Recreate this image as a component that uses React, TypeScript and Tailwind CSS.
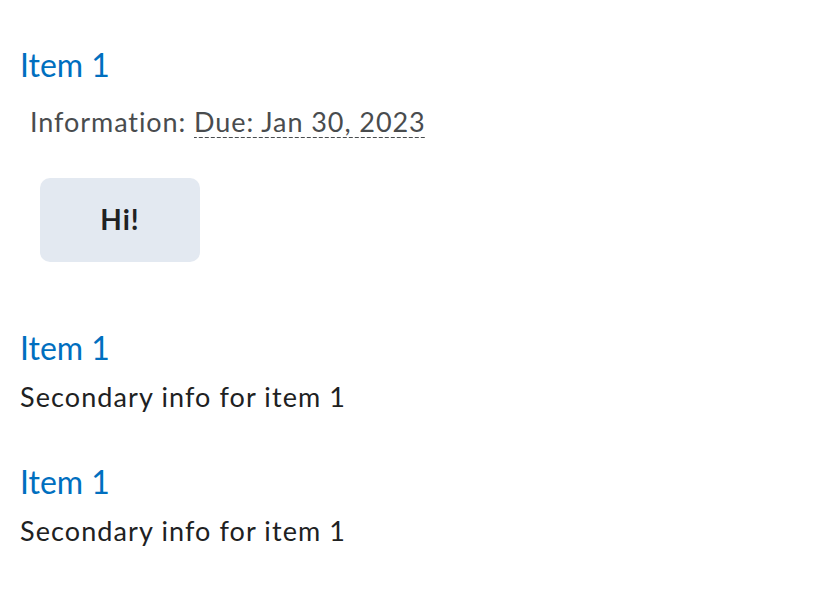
export default function App() {
  return (
    <div className="min-h-[594px] bg-white px-5 pt-[45px] text-[#202122]" style={{ fontFamily: 'Lato, "Noto Sans", sans-serif' }}>
      <div className="text-[32px] leading-[40px] text-[#006fbf]">Item 1</div>
      <div className="mt-[17px] pl-[10px] text-[27px] leading-[40px] tracking-[0.93px] text-[#494c4e]">
        Information:{' '}
        <span className="bg-[linear-gradient(to_right,#494c4e_4px,transparent_4px)] bg-[length:6px_1px] bg-bottom bg-repeat-x">
          Due: Jan 30, 2023
        </span>
      </div>
      <div className="mt-[36px] pl-5">
        <button className="h-[84px] w-[160px] rounded-[10px] bg-[#e3e9f1] pb-[3px] text-[28px] font-bold tracking-[1px] text-[#202122]">Hi!</button>
      </div>
      <div className="mt-[66px]">
        <div className="text-[32px] leading-[40px] text-[#006fbf]">Item 1</div>
        <div className="mt-[11px] text-[27px] leading-[36px] tracking-[1.1px]">Secondary info for item 1</div>
      </div>
      <div className="mt-[47px]">
        <div className="text-[32px] leading-[40px] text-[#006fbf]">Item 1</div>
        <div className="mt-[11px] text-[27px] leading-[36px] tracking-[1.1px]">Secondary info for item 1</div>
      </div>
    </div>
  );
}
